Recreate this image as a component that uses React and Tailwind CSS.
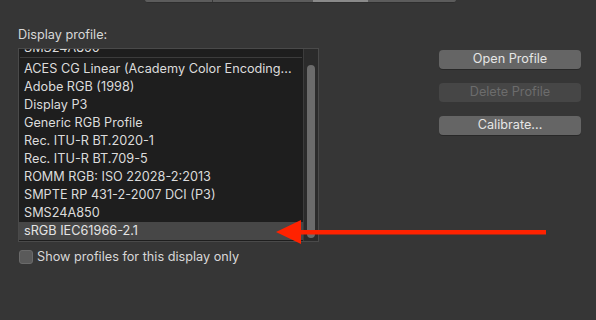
import React from "react";

const rows = [
  "SMS24A850",
  "ACES CG Linear (Academy Color Encoding...",
  "Adobe RGB (1998)",
  "Display P3",
  "Generic RGB Profile",
  "Rec. ITU-R BT.2020-1",
  "Rec. ITU-R BT.709-5",
  "ROMM RGB: ISO 22028-2:2013",
  "SMPTE RP 431-2-2007 DCI (P3)",
  "SMS24A850",
  "sRGB IEC61966-2.1",
];

function Button({ children, disabled }) {
  return (
    <div
      className={
        "h-[19px] w-[142px] rounded-[4px] flex items-center justify-center text-[12.7px] leading-none " +
        (disabled
          ? "bg-[#464646] text-[#6c6c6c]"
          : "bg-[#656565] text-[#e6e6e6] shadow-[0_1px_0_rgba(0,0,0,0.25)]")
      }
    >
      {children}
    </div>
  );
}

export default function App() {
  return (
    <div
      className="relative w-[596px] h-[320px] bg-[#363636] overflow-hidden text-[#dedede]"
      style={{ fontFamily: "Inter, 'Noto Sans', sans-serif" }}
    >
      {/* top segmented control bottom edge */}
      <div className="ml-[145px] w-[311px] h-[3px] flex rounded-b-[3px] overflow-hidden bg-[#5c5c5c] border-b border-[#2e2e2e]">
        <div className="w-[68px] border-r border-[#3a3a3a]" />
        <div className="w-[100px]" />
        <div className="w-[55px] bg-[#8a8a8a]" />
        <div className="flex-1" />
      </div>

      <div className="flex mt-[24px]">
        {/* left column */}
        <div className="ml-[18px] w-[301px] flex flex-col">
          <div className="h-[16px] text-[12.7px] leading-[16px] text-[#d8d8d8]">Display profile:</div>
          <div className="relative mt-[5px] h-[194px] border border-[#4a4a4a] bg-[#1e1e1e] flex overflow-hidden">
            <div className="flex-1 overflow-hidden flex flex-col">
              <div className="-mt-[7px] flex flex-col">
                {rows.map((r, i) => (
                  <div
                    key={i}
                    className={
                      "h-[18px] shrink-0 pl-[5px] text-[12.7px] whitespace-nowrap " +
                      (i === 0 ? "leading-[11px] " : "leading-[18px] ") +
                      (i === rows.length - 1 ? "bg-[#474747] text-[#e4e4e4]" : "text-[#dcdcdc]")
                    }
                  >
                    {r}
                  </div>
                ))}
              </div>
            </div>
            <div className="w-[15px] shrink-0 bg-[#2b2b2b] border-l border-[#3c3c3c] flex justify-center pt-[16px] pb-[3px]">
              <div className="w-[8px] h-full rounded-full bg-[#6b6b6b]" />
            </div>
            <div className="absolute left-[1px] top-[8px] w-[282px] h-[1px] bg-[#3c3c3c]" />
          </div>
          <div className="mt-[7px] flex items-center">
            <div className="ml-[1px] w-[14px] h-[14px] rounded-[3px] bg-[#5a5a5a] border border-[#6a6a6a]" />
            <div className="ml-[4px] text-[12.7px] leading-[16px] text-[#d8d8d8]">Show profiles for this display only</div>
          </div>
        </div>

        {/* right column */}
        <div className="ml-[120px] pt-[23px] flex flex-col gap-[14px]">
          <Button>Open Profile</Button>
          <Button disabled>Delete Profile</Button>
          <Button>Calibrate...</Button>
        </div>
      </div>

      {/* red arrow annotation */}
      <svg className="absolute left-0 top-0" width="596" height="320" viewBox="0 0 596 320">
        <rect x="298" y="230" width="248" height="4.5" fill="#ff2200" />
        <polygon points="276,232 301,220 301,244" fill="#ff2200" />
      </svg>
    </div>
  );
}
